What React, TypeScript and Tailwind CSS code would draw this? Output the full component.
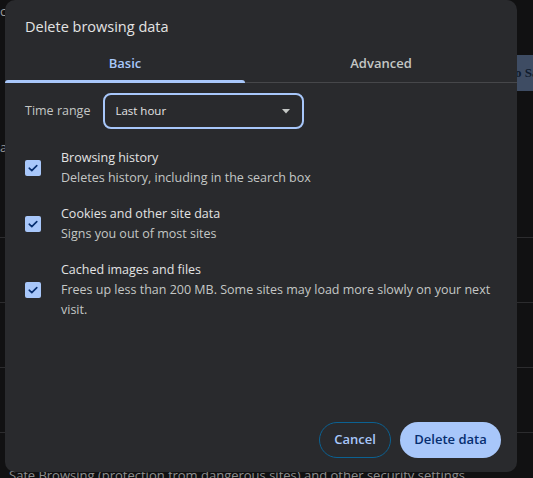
import React from 'react';

const font = { fontFamily: '"Open Sans", "Noto Sans", "Liberation Sans", sans-serif' };

interface Item {
  title: string;
  desc: string;
}

const items: Item[] = [
  { title: 'Browsing history', desc: 'Deletes history, including in the search box' },
  { title: 'Cookies and other site data', desc: 'Signs you out of most sites' },
  { title: 'Cached images and files', desc: 'Frees up less than 200 MB. Some sites may load more slowly on your next visit.' },
];

function CheckBox() {
  return (
    <div className="w-4 h-4 shrink-0 rounded-[2px] bg-[#a8c7fa] flex items-center justify-center">
      <svg width="12" height="12" viewBox="0 0 12 12" fill="none">
        <path d="M2.2 6.2 L4.8 8.6 L9.8 3.6" stroke="#062e6f" strokeWidth="1.6" strokeLinecap="round" strokeLinejoin="round" />
      </svg>
    </div>
  );
}

function Background() {
  return (
    <div className="absolute inset-0 bg-[#111112] overflow-hidden">
      <span className="absolute left-0 top-[2px] text-[13px] text-[#9a9a9a]">c</span>
      <span className="absolute left-0 top-[138px] text-[13px] text-[#9a9a9a]">a</span>
      <div className="absolute right-0 top-[55px] w-[16px] h-[36px] bg-[#3e4c63] text-[#0f1b2d] text-[13px] font-bold leading-[36px] whitespace-nowrap overflow-hidden" style={{ fontFamily: '"Liberation Serif", serif' }}>
        <span className="-ml-[2px]">o Sa</span>
      </div>
      {[237, 302, 367, 432].map((y) => (
        <div key={y} className="absolute left-0 right-0 h-px bg-[#2c2c2e]" style={{ top: y }} />
      ))}
      <div className="absolute left-[9px] top-[466px] text-[13px] text-[#8e8e8e] whitespace-nowrap">
        Safe Browsing (protection from dangerous sites) and other security settings
      </div>
    </div>
  );
}

export default function App() {
  return (
    <div className="relative w-[533px] h-[478px] overflow-hidden" style={font}>
      <Background />
      <div className="absolute left-[5px] top-0 w-[512px] h-[472px] bg-[#292a2d] rounded-[10px] flex flex-col">
        <h2 className="pl-5 pt-[16px] h-[45px] text-[14.5px] leading-[22px] text-[#e3e3e3]">Delete browsing data</h2>

        <div className="flex h-[38px] border-b border-[#46474a]">
          <div className="relative w-[240px] flex items-center justify-center text-[13px] font-semibold text-[#a8c7fa]">
            Basic
            <div className="absolute left-0 right-0 bottom-[-1px] h-[3px] rounded-t-[3px] bg-[#a8c7fa]" />
          </div>
          <div className="flex-1 flex items-center justify-center text-[13px] font-semibold text-[#c4c7c5]">Advanced</div>
        </div>

        <div className="flex items-center pl-5 mt-[10px] gap-[13px]">
          <span className="text-[12.5px] text-[#c4c7c5]">Time range</span>
          <div className="w-[201px] h-[36px] rounded-[8px] border-2 border-[#a8c7fa] flex items-center justify-between pl-[10px] pr-[12px]">
            <span className="text-[11.5px] text-[#e3e3e3]">Last hour</span>
            <svg width="8" height="5" viewBox="0 0 8 5">
              <path d="M0 0 L8 0 L4 4.5 Z" fill="#c4c7c5" />
            </svg>
          </div>
        </div>

        <div className="flex flex-col gap-4 mt-[19px] pl-5 pr-5">
          {items.map((it) => (
            <div key={it.title} className="flex items-center gap-5">
              <CheckBox />
              <div className="flex flex-col text-[12.5px] leading-[20px]">
                <span className="text-[#e3e3e3]">{it.title}</span>
                <span className="text-[#c4c7c5]">{it.desc}</span>
              </div>
            </div>
          ))}
        </div>

        <div className="mt-auto flex justify-end gap-[9px] pr-[16px] pb-[14px]">
          <button className="h-[36px] w-[72px] rounded-full border border-[#0b6192] text-[13px] font-semibold text-[#a8c7fa]">
            Cancel
          </button>
          <button className="h-[36px] w-[101px] rounded-full bg-[#a8c7fa] text-[13px] font-semibold text-[#062e6f]">
            Delete data
          </button>
        </div>
      </div>
    </div>
  );
}
